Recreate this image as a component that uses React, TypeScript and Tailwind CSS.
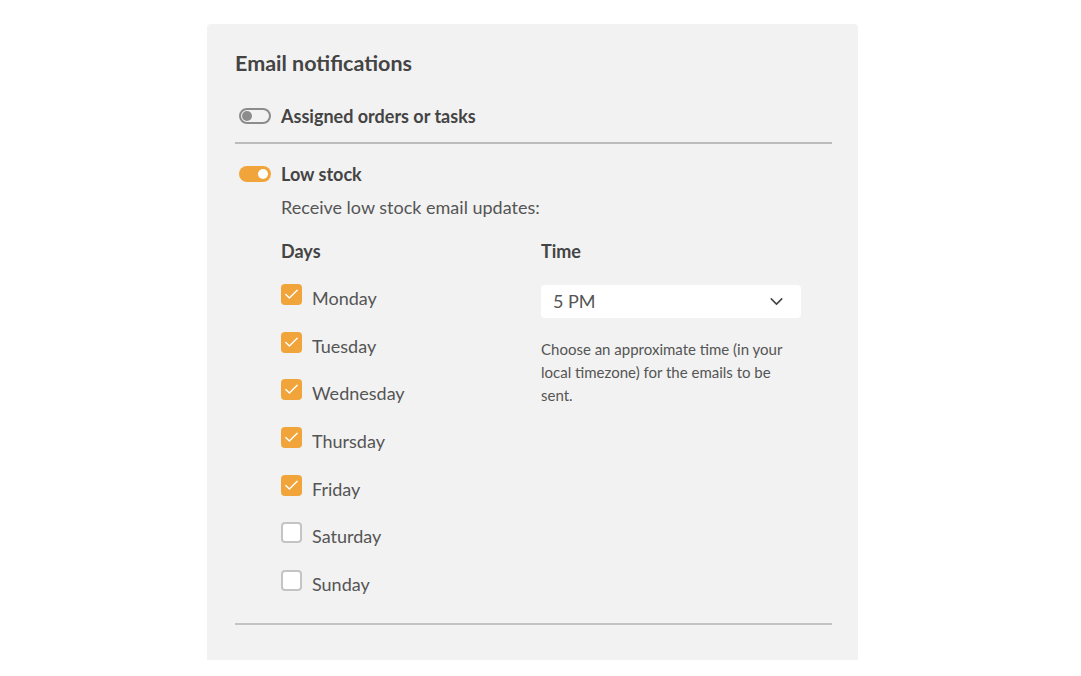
import { Check, ChevronDown } from "lucide-react";

const days = [
  { name: "Monday", on: true },
  { name: "Tuesday", on: true },
  { name: "Wednesday", on: true },
  { name: "Thursday", on: true },
  { name: "Friday", on: true },
  { name: "Saturday", on: false },
  { name: "Sunday", on: false },
];

function Toggle({ on }: { on: boolean }) {
  if (on) {
    return (
      <div className="flex h-[16px] w-[32px] items-center justify-end rounded-full bg-[#f0a43a] pr-[3px]">
        <div className="h-[10px] w-[10px] rounded-full bg-white" />
      </div>
    );
  }
  return (
    <div className="flex h-[16px] w-[32px] items-center rounded-full border-2 border-[#8c8c8c] pl-[1px]">
      <div className="h-[10px] w-[10px] rounded-full bg-[#8c8c8c]" />
    </div>
  );
}

function DayRow({ name, on }: { name: string; on: boolean }) {
  return (
    <div className="flex h-[47.7px] items-start">
      <div className="pt-[1px]">
        {on ? (
          <div className="flex h-[21px] w-[21px] items-center justify-center rounded-[4px] bg-[#f0a43a]">
            <Check size={17} strokeWidth={2} className="text-white" />
          </div>
        ) : (
          <div className="h-[21px] w-[21px] rounded-[4px] border-2 border-[#c4c4c4] bg-white" />
        )}
      </div>
      <span className="ml-[10px] pt-[2px] text-[18px] leading-[26px] text-[#555]">{name}</span>
    </div>
  );
}

export default function App() {
  return (
    <div className="min-h-[676px] bg-white pt-[24px] font-['Lato',sans-serif]">
      <div className="ml-[207px] w-[651px] rounded-t-[4px] bg-[#f2f2f2] pb-[35px] pl-[28px] pr-[26px] pt-[25px]">
        <h2 className="text-[21.5px] font-bold leading-[28px] text-[#444]">Email notifications</h2>

        <div className="mt-[26px] flex items-center pl-[4px]">
          <Toggle on={false} />
          <span className="ml-[10px] text-[18px] font-bold leading-[26px] text-[#444]">Assigned orders or tasks</span>
        </div>
        <div className="mt-[13px] h-[2px] bg-[#bcbcbc]" />

        <div className="mt-[17px] flex items-center pl-[4px]">
          <Toggle on={true} />
          <span className="ml-[10px] text-[18px] font-bold leading-[26px] text-[#444]">Low stock</span>
        </div>

        <div className="pl-[46px]">
          <p className="mt-[7px] text-[18px] leading-[26px] text-[#555]">Receive low stock email updates:</p>

          <div className="mt-[18px] flex">
            <div className="w-[260px]">
              <h3 className="text-[18px] font-bold leading-[26px] text-[#444]">Days</h3>
              <div className="mt-[19px]">
                {days.map((d) => (
                  <DayRow key={d.name} name={d.name} on={d.on} />
                ))}
              </div>
            </div>
            <div className="w-[260px]">
              <h3 className="text-[18px] font-bold leading-[26px] text-[#444]">Time</h3>
              <div className="mt-[21px] flex h-[33px] items-center justify-between rounded-[4px] bg-white pl-[12px] pr-[14px]">
                <span className="text-[18px] text-[#555]">5 PM</span>
                <ChevronDown size={21} strokeWidth={1.8} className="text-[#444]" />
              </div>
              <p className="mt-[20px] text-[15px] leading-[23px] text-[#555]">
                Choose an approximate time (in your local timezone) for the emails to be sent.
              </p>
            </div>
          </div>
        </div>

        <div className="mt-[6px] h-[2px] bg-[#c4c4c4]" />
      </div>
    </div>
  );
}
